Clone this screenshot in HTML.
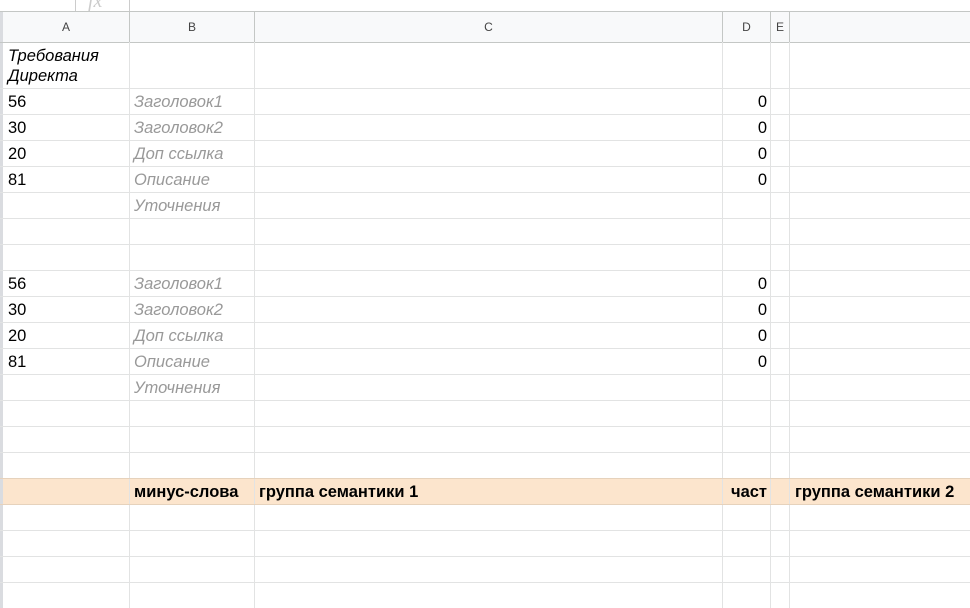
<!DOCTYPE html>
<html><head><meta charset="utf-8"><style>
*{margin:0;padding:0;box-sizing:border-box}
body{width:970px;height:608px;overflow:hidden;background:#fff;font-family:"Liberation Sans",Arial,sans-serif;position:relative}
.a{position:absolute}
.hl{position:absolute;left:0;width:970px;height:1px;background:#e2e3e3}
.vl{position:absolute;width:1px;background:#e2e3e3;top:42px;height:566px}
.hdr{position:absolute;top:12px;height:30px;line-height:31px;text-align:center;font-size:12px;color:#444;background:#f8f9fa}
.t{position:absolute;font-size:16.5px;line-height:26px;white-space:nowrap;color:#000}
.g{color:#999;font-style:italic}
.r{text-align:right}
.b{font-weight:bold}
</style></head><body>
<div class="a" style="left:75px;top:0;width:1px;height:11px;background:#ccc"></div>
<div class="a" style="left:88px;top:-10px;font-size:20px;color:#ccc;font-style:italic;font-family:'Liberation Serif',serif">fx</div>
<div class="a" style="left:129px;top:0;width:1px;height:11px;background:#ccc"></div>
<div class="a" style="left:0;top:11px;width:970px;height:1px;background:#c4c7c5"></div>
<div class="hdr" style="left:3px;width:126px">A</div>
<div class="hdr" style="left:130px;width:124px">B</div>
<div class="hdr" style="left:255px;width:467px">C</div>
<div class="hdr" style="left:723px;width:47px">D</div>
<div class="hdr" style="left:771px;width:18px">E</div>
<div class="hdr" style="left:790px;width:180px"></div>
<div class="a" style="left:0;top:12px;width:3px;height:596px;background:#dadce0"></div>
<div class="a" style="left:0;top:42px;width:970px;height:1px;background:#c4c7c5"></div>
<div class="a" style="left:129px;top:12px;width:1px;height:30px;background:#c4c7c5"></div>
<div class="a" style="left:254px;top:12px;width:1px;height:30px;background:#c4c7c5"></div>
<div class="a" style="left:722px;top:12px;width:1px;height:30px;background:#c4c7c5"></div>
<div class="a" style="left:770px;top:12px;width:1px;height:30px;background:#c4c7c5"></div>
<div class="a" style="left:789px;top:12px;width:1px;height:30px;background:#c4c7c5"></div>
<div class="a" style="left:3px;top:478px;width:967px;height:26px;background:#fce5cd"></div>
<div class="vl" style="left:129px"></div>
<div class="vl" style="left:254px"></div>
<div class="vl" style="left:722px"></div>
<div class="vl" style="left:770px"></div>
<div class="vl" style="left:789px"></div>
<div class="hl" style="top:88px"></div><div class="hl" style="top:114px"></div><div class="hl" style="top:140px"></div><div class="hl" style="top:166px"></div><div class="hl" style="top:192px"></div><div class="hl" style="top:218px"></div><div class="hl" style="top:244px"></div><div class="hl" style="top:270px"></div><div class="hl" style="top:296px"></div><div class="hl" style="top:322px"></div><div class="hl" style="top:348px"></div><div class="hl" style="top:374px"></div><div class="hl" style="top:400px"></div><div class="hl" style="top:426px"></div><div class="hl" style="top:452px"></div><div class="hl" style="top:478px;background:#e6d2bc"></div><div class="hl" style="top:504px;background:#e6d2bc"></div><div class="hl" style="top:530px"></div><div class="hl" style="top:556px"></div><div class="hl" style="top:582px"></div>
<div class="t" style="left:8px;top:46px;line-height:20px;font-style:italic">Требования<br>Директа</div>
<div class="t" style="left:8px;top:89px">56</div><div class="t g" style="left:134px;top:89px">Заголовок1</div><div class="t r" style="left:722px;width:45px;top:89px">0</div>
<div class="t" style="left:8px;top:115px">30</div><div class="t g" style="left:134px;top:115px">Заголовок2</div><div class="t r" style="left:722px;width:45px;top:115px">0</div>
<div class="t" style="left:8px;top:141px">20</div><div class="t g" style="left:134px;top:141px">Доп ссылка</div><div class="t r" style="left:722px;width:45px;top:141px">0</div>
<div class="t" style="left:8px;top:167px">81</div><div class="t g" style="left:134px;top:167px">Описание</div><div class="t r" style="left:722px;width:45px;top:167px">0</div>
<div class="t g" style="left:134px;top:193px">Уточнения</div>
<div class="t" style="left:8px;top:271px">56</div><div class="t g" style="left:134px;top:271px">Заголовок1</div><div class="t r" style="left:722px;width:45px;top:271px">0</div>
<div class="t" style="left:8px;top:297px">30</div><div class="t g" style="left:134px;top:297px">Заголовок2</div><div class="t r" style="left:722px;width:45px;top:297px">0</div>
<div class="t" style="left:8px;top:323px">20</div><div class="t g" style="left:134px;top:323px">Доп ссылка</div><div class="t r" style="left:722px;width:45px;top:323px">0</div>
<div class="t" style="left:8px;top:349px">81</div><div class="t g" style="left:134px;top:349px">Описание</div><div class="t r" style="left:722px;width:45px;top:349px">0</div>
<div class="t g" style="left:134px;top:375px">Уточнения</div>
<div class="t b" style="left:134px;top:479px">минус-слова</div>
<div class="t b" style="left:259px;top:479px">группа семантики 1</div>
<div class="t b" style="left:731px;top:479px">част</div>
<div class="t b" style="left:795px;top:479px">группа семантики 2</div>
</body></html>
